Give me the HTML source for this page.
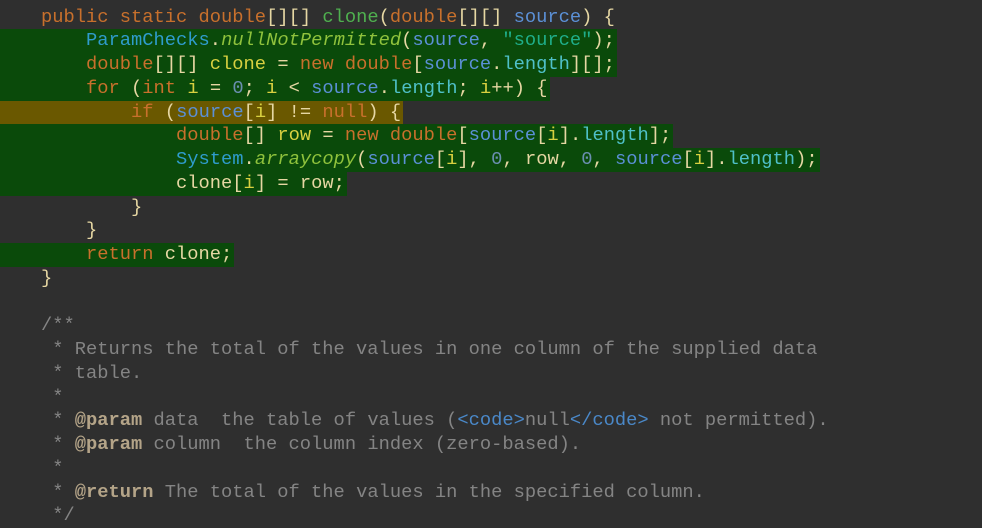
<!DOCTYPE html>
<html><head><meta charset="utf-8"><style>
html,body{margin:0;padding:0;background:#2f2f2f;width:982px;height:528px;overflow:hidden}
.c{position:absolute;left:-4px;top:5.5px;font-family:"Liberation Mono",monospace;font-size:18.75px;line-height:23.75px;color:#e6d7a3}
.l{height:23.75px;white-space:pre}
.l>span{display:inline-block;padding-right:2px}
.g{background:#0a4a0a}
.y{background:#6a5800}
.k{color:#c8702c}
.m{color:#4fb04f}
.v{color:#d8d040}
.s{color:#5b90d6}
.n{color:#4fc0c8}
.t{color:#2f9ccc}
.it{color:#8fc23c;font-style:italic}
.str{color:#1fae8a}
.num{color:#6a8fb0}
.cm{color:#848484}
.tag{color:#b4a488;font-weight:bold}
.h{color:#4a88c8}
</style></head><body><div class="c">
<div class="l"><span>    <span class="k">public static double</span>[][] <span class="m">clone</span>(<span class="k">double</span>[][] <span class="s">source</span>) {</span></div>
<div class="l"><span class="g">        <span class="t">ParamChecks</span>.<span class="it">nullNotPermitted</span>(<span class="s">source</span>, <span class="str">"source"</span>);</span></div>
<div class="l"><span class="g">        <span class="k">double</span>[][] <span class="v">clone</span> = <span class="k">new double</span>[<span class="s">source</span>.<span class="n">length</span>][];</span></div>
<div class="l"><span class="g">        <span class="k">for</span> (<span class="k">int</span> <span class="v">i</span> = <span class="num">0</span>; <span class="v">i</span> &lt; <span class="s">source</span>.<span class="n">length</span>; <span class="v">i</span>++) {</span></div>
<div class="l"><span class="y">            <span class="k">if</span> (<span class="s">source</span>[<span class="v">i</span>] != <span class="k">null</span>) {</span></div>
<div class="l"><span class="g">                <span class="k">double</span>[] <span class="v">row</span> = <span class="k">new double</span>[<span class="s">source</span>[<span class="v">i</span>].<span class="n">length</span>];</span></div>
<div class="l"><span class="g">                <span class="t">System</span>.<span class="it">arraycopy</span>(<span class="s">source</span>[<span class="v">i</span>], <span class="num">0</span>, row, <span class="num">0</span>, <span class="s">source</span>[<span class="v">i</span>].<span class="n">length</span>);</span></div>
<div class="l"><span class="g">                clone[<span class="v">i</span>] = row;</span></div>
<div class="l"><span>            }</span></div>
<div class="l"><span>        }</span></div>
<div class="l"><span class="g">        <span class="k">return</span> clone;</span></div>
<div class="l"><span>    }</span></div>
<div class="l"><span> </span></div>
<div class="l cm"><span>    /**</span></div>
<div class="l cm"><span>     * Returns the total of the values in one column of the supplied data</span></div>
<div class="l cm"><span>     * table.</span></div>
<div class="l cm"><span>     *</span></div>
<div class="l cm"><span>     * <span class="tag">@param</span> data  the table of values (<span class="h">&lt;code&gt;</span>null<span class="h">&lt;/code&gt;</span> not permitted).</span></div>
<div class="l cm"><span>     * <span class="tag">@param</span> column  the column index (zero-based).</span></div>
<div class="l cm"><span>     *</span></div>
<div class="l cm"><span>     * <span class="tag">@return</span> The total of the values in the specified column.</span></div>
<div class="l cm"><span>     */</span></div>
</div></body></html>
